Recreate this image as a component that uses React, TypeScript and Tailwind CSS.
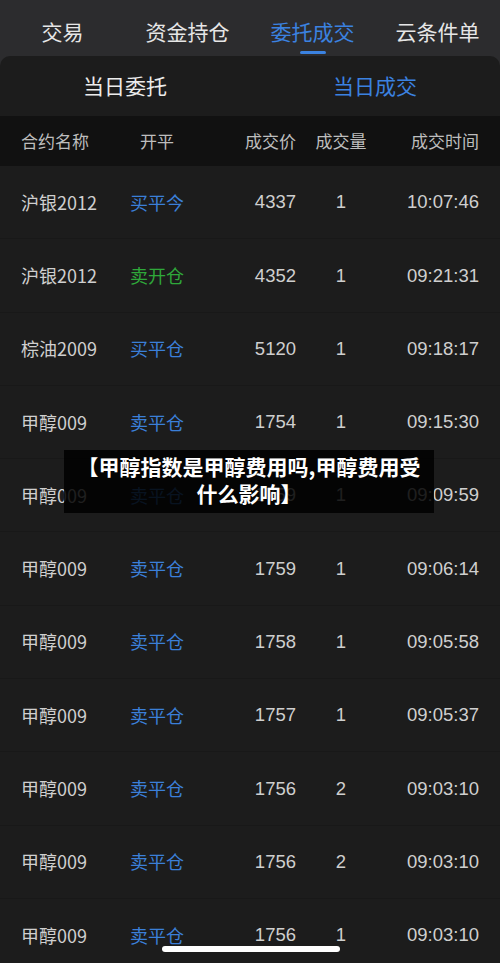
const rows = [
  { name: '沪银2012', side: '买平今', color: 'blue', price: '4337', vol: '1', time: '10:07:46' },
  { name: '沪银2012', side: '卖开仓', color: 'green', price: '4352', vol: '1', time: '09:21:31' },
  { name: '棕油2009', side: '买平仓', color: 'blue', price: '5120', vol: '1', time: '09:18:17' },
  { name: '甲醇009', side: '卖平仓', color: 'blue', price: '1754', vol: '1', time: '09:15:30' },
  { name: '甲醇009', side: '卖平仓', color: 'blue', price: '1759', vol: '1', time: '09:09:59' },
  { name: '甲醇009', side: '卖平仓', color: 'blue', price: '1759', vol: '1', time: '09:06:14' },
  { name: '甲醇009', side: '卖平仓', color: 'blue', price: '1758', vol: '1', time: '09:05:58' },
  { name: '甲醇009', side: '卖平仓', color: 'blue', price: '1757', vol: '1', time: '09:05:37' },
  { name: '甲醇009', side: '卖平仓', color: 'blue', price: '1756', vol: '2', time: '09:03:10' },
  { name: '甲醇009', side: '卖平仓', color: 'blue', price: '1756', vol: '2', time: '09:03:10' },
  { name: '甲醇009', side: '卖平仓', color: 'blue', price: '1756', vol: '1', time: '09:03:10' },
];

const tabs = ['交易', '资金持仓', '委托成交', '云条件单'];
const num = { fontFamily: '"Liberation Sans", sans-serif' };

export default function App() {
  return (
    <div
      className="relative w-[500px] h-[963px] overflow-hidden bg-[#2c2c2e] text-[#d4d4d4]"
      style={{ fontFamily: '"Noto Sans CJK SC", "Liberation Sans", sans-serif' }}
    >
      {/* Top tabs */}
      <div className="flex h-[56px] items-center pt-[8px]">
        {tabs.map((t, i) => (
          <div key={t} className="relative flex-1 flex items-center justify-center h-full">
            <span className={`text-[21px] ${i === 2 ? 'text-[#3b82e0]' : 'text-[#e6e6e6]'}`}>{t}</span>
            {i === 2 && <div className="absolute bottom-[2px] left-1/2 -translate-x-1/2 w-[26px] h-[3px] rounded-full bg-[#3b82e0]" />}
          </div>
        ))}
      </div>

      {/* Card */}
      <div className="rounded-t-[10px] bg-[#1c1c1c] overflow-hidden h-[907px]">
        <div className="flex h-[60px] items-center">
          <div className="flex-1 text-center text-[21px] text-[#ececec]">当日委托</div>
          <div className="flex-1 text-center text-[21px] text-[#3b82e0]">当日成交</div>
        </div>

        <div className="flex h-[50px] items-center bg-[#111111] text-[17px] text-[#bdbdbd]">
          <div className="w-[130px] pl-[21px]">合约名称</div>
          <div className="w-[90px] pl-[10px]">开平</div>
          <div className="w-[76px] text-right">成交价</div>
          <div className="w-[90px] text-center">成交量</div>
          <div className="flex-1 pr-[21px] text-right">成交时间</div>
        </div>

        {rows.map((r, i) => (
          <div key={i} className="flex h-[73.3px] items-center border-b border-[#181818] text-[18px]">
            <div className="w-[130px] pl-[21px] text-[#cfcfcf]">{r.name}</div>
            <div className={`w-[90px] ${r.color === 'green' ? 'text-[#2fa83a]' : 'text-[#3b7fd8]'}`}>{r.side}</div>
            <div className="w-[76px] text-right text-[18.5px] text-[#cfcfcf]" style={num}>{r.price}</div>
            <div className="w-[90px] text-center text-[18.5px] text-[#cfcfcf]" style={num}>{r.vol}</div>
            <div className="flex-1 pr-[21px] text-right text-[18.5px] text-[#cfcfcf]" style={num}>{r.time}</div>
          </div>
        ))}
      </div>

      {/* Overlay caption */}
      <div className="absolute left-[64px] top-[450px] w-[370px] h-[63px] bg-black/85 flex flex-col items-center pt-[3px] leading-[27px] text-white font-bold text-[21px]">
        <span>【甲醇指数是甲醇费用吗,甲醇费用受</span>
        <span>什么影响】</span>
      </div>

      {/* Home indicator */}
      <div className="absolute left-[162px] top-[946px] w-[178px] h-[6px] rounded-full bg-white" />
    </div>
  );
}
